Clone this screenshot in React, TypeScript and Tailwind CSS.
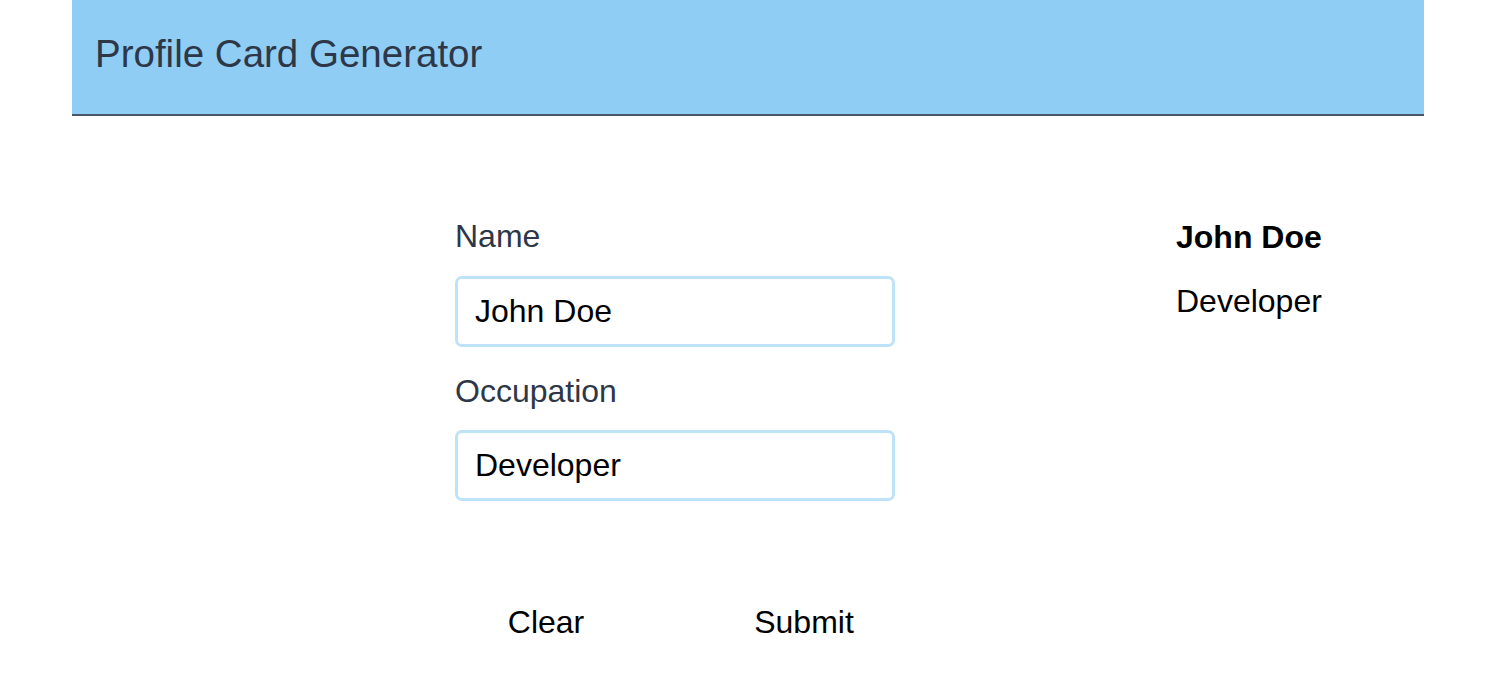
import React, { useState } from 'react';

const App: React.FC = () => {
  const [name, setName] = useState('John Doe');
  const [occupation, setOccupation] = useState('Developer');

  return (
    <div className="min-h-screen bg-white font-['Liberation_Sans',Arial,sans-serif]">
      <header className="mx-[72px] flex h-[116px] items-center border-b-2 border-[#4a5568] bg-[#90cdf4] px-[23px] pb-[6px]">
        <h1 className="text-[38.5px] leading-none text-[#2d3748]">Profile Card Generator</h1>
      </header>

      <main className="flex pt-[96px]">
        <form className="ml-[455px] flex w-[440px] flex-col" onSubmit={(e) => e.preventDefault()}>
          <label className="mb-4 text-[32px] leading-[48px] text-[#2d3748]">Name</label>
          <input
            className="h-[71px] rounded-[7px] border-[3px] border-[#bee3f8] px-[17px] text-[32px] text-black outline-none"
            value={name}
            onChange={(e) => setName(e.target.value)}
          />
          <label className="mt-5 mb-[15px] text-[32px] leading-[48px] text-[#2d3748]">Occupation</label>
          <input
            className="h-[71px] rounded-[7px] border-[3px] border-[#bee3f8] px-[17px] text-[32px] text-black outline-none"
            value={occupation}
            onChange={(e) => setOccupation(e.target.value)}
          />
          <div className="mt-[97px] flex justify-between">
            <button
              type="button"
              className="w-[182px] text-center text-[32px] leading-[48px] text-black"
              onClick={() => {
                setName('');
                setOccupation('');
              }}
            >
              Clear
            </button>
            <button type="submit" className="w-[182px] text-center text-[32px] leading-[48px] text-black">
              Submit
            </button>
          </div>
        </form>

        <div className="ml-[281px] flex flex-col gap-4 pt-[1px]">
          <div className="text-[32px] font-bold leading-[48px] text-black">{name}</div>
          <div className="text-[32px] leading-[48px] text-black">{occupation}</div>
        </div>
      </main>
    </div>
  );
};

export default App;
